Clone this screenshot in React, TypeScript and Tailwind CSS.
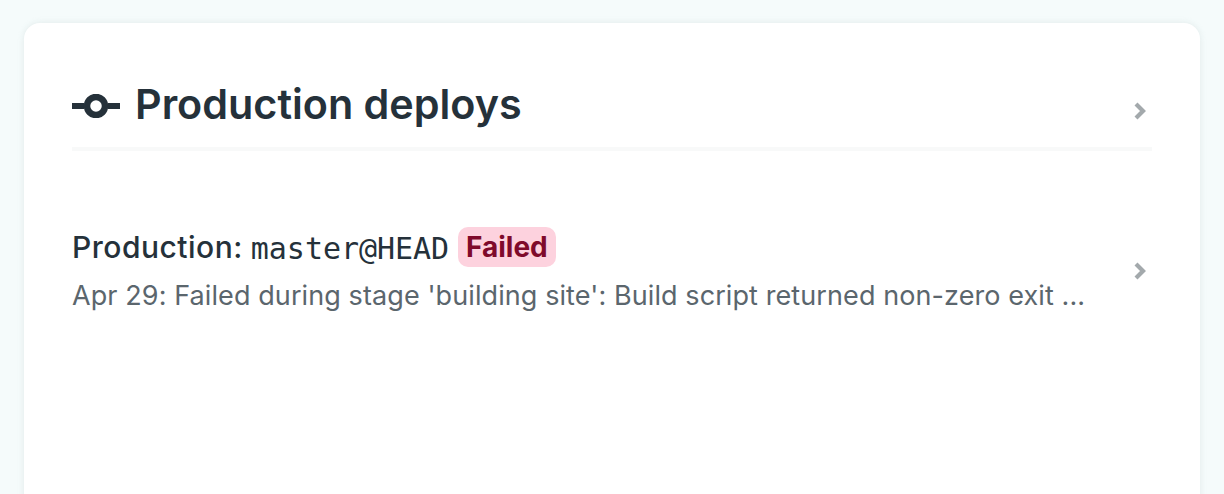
const sans = "font-['Inter','Noto_Sans',sans-serif]";

function Chevron({ className }: { className?: string }) {
  return (
    <svg width="12" height="18" viewBox="0 0 12 18" fill="none" className={className}>
      <path d="M2 2 L9 9 L2 16" stroke="#a3a9ac" strokeWidth="4.2" />
    </svg>
  );
}

function DeployIcon() {
  return (
    <svg width="48" height="24" viewBox="0 0 48 24" fill="none" className="mt-[3px] shrink-0">
      <path d="M0 12 H12 M36 12 H48" stroke="#25313a" strokeWidth="6" />
      <circle cx="24" cy="12" r="9" stroke="#25313a" strokeWidth="6.5" />
    </svg>
  );
}

export default function App() {
  return (
    <div className={`h-[494px] overflow-hidden bg-[#f5fbfb] pt-[23px] px-6 ${sans}`}>
      <div className="h-[520px] rounded-2xl bg-white px-12 shadow-[0_0_6px_rgba(200,215,215,0.45)]">
        <div className="flex h-[128px] items-center justify-between border-b-4 border-[#f8f9f9] pt-[53px] pb-[15px]">
          <h2 className="flex items-center gap-[15px] text-[41.3px] leading-[48px] font-semibold text-[#25313a]">
            <DeployIcon />
            Production deploys
          </h2>
          <Chevron className="mt-[14px] mr-[6px]" />
        </div>
        <div className="flex items-center justify-between pt-[76px]">
          <div>
            <div className="flex h-10 items-center text-[#25313a]">
              <span className="text-[30px] font-medium tracking-[0.5px]">Production:</span>
              <span className="mt-[2px] ml-2 font-['DejaVu_Sans_Mono',monospace] text-[30px] tracking-[-0.05px]">master@HEAD</span>
              <span className="ml-[9px] flex h-10 items-center rounded-[10px] bg-[#fdd2de] px-2 text-[28px] font-bold text-[#7f0a2b]">
                Failed
              </span>
            </div>
            <p className="mt-[11px] text-[27px] leading-[36px] tracking-[0.09px] text-[#5b666d]">
              Apr 29: Failed during stage 'building site': Build script returned non-zero exit ...
            </p>
          </div>
          <Chevron className="mr-[6px]" />
        </div>
      </div>
    </div>
  );
}
